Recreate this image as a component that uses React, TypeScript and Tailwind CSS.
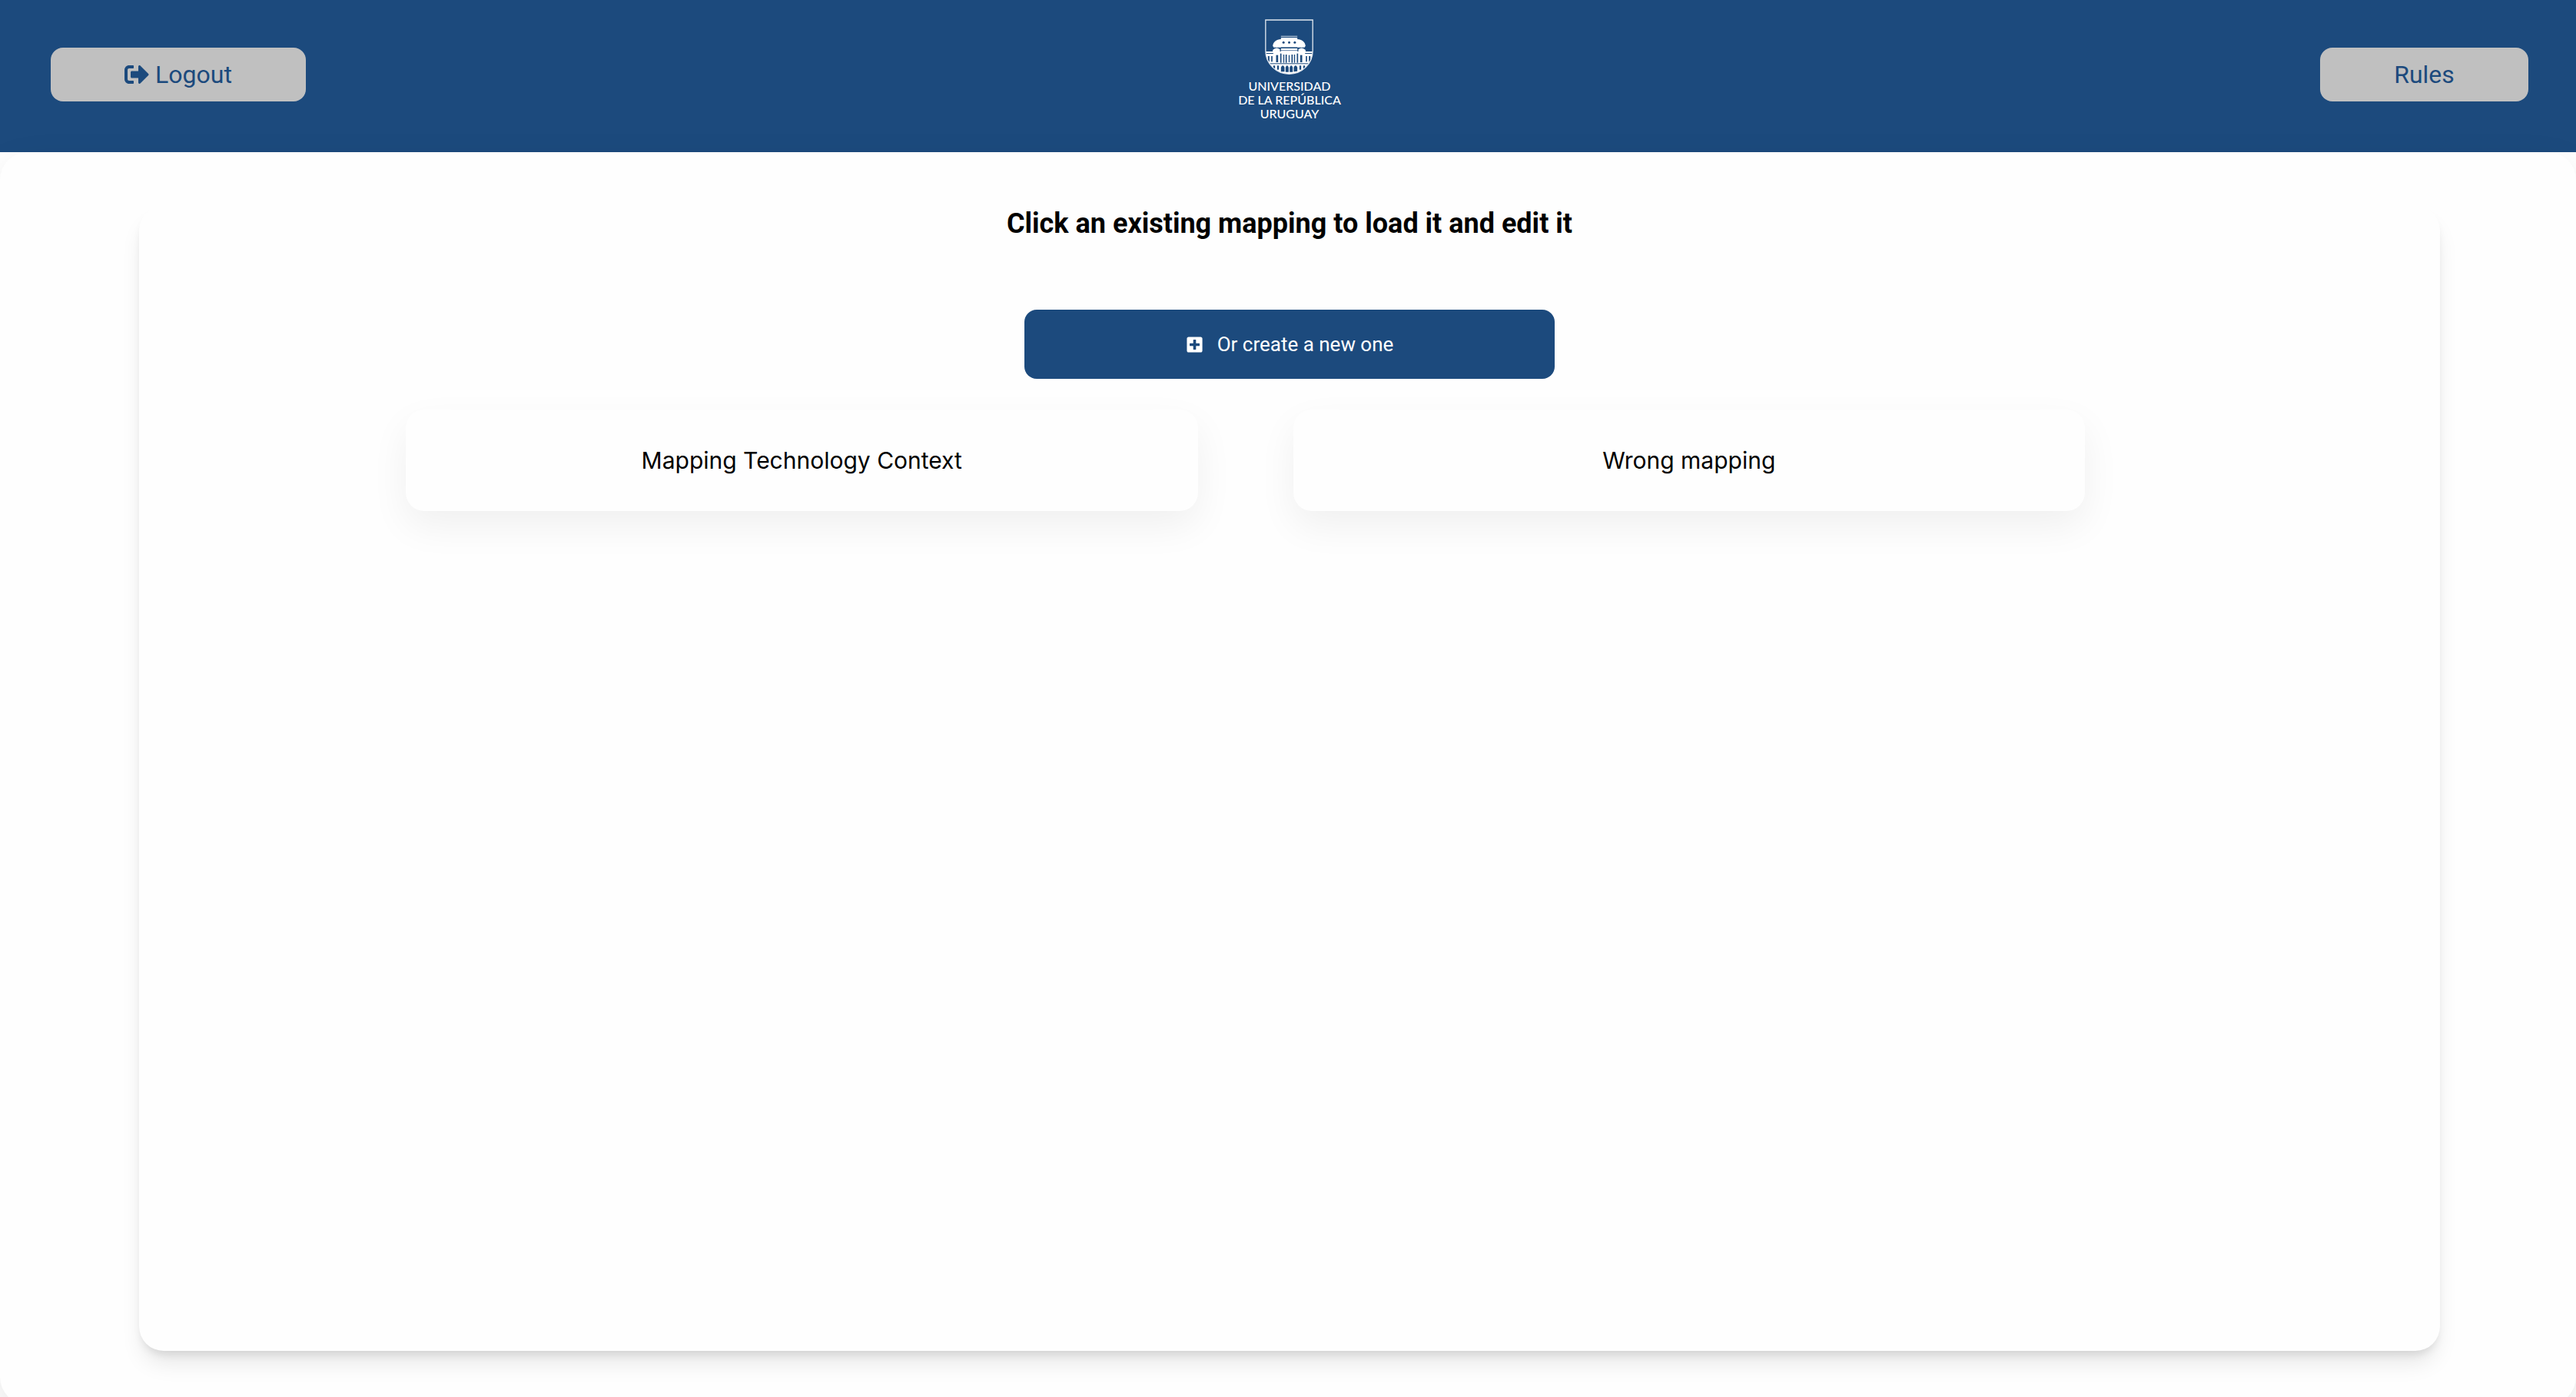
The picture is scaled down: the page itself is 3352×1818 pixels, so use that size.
import { FaPlusSquare, FaSignOutAlt } from "react-icons/fa";

const mappings = ["Mapping Technology Context", "Wrong mapping"];

function Shield() {
  return (
    <svg viewBox="50 28 188 216" className="h-[72px] w-[63px]" aria-hidden="true">
      <defs>
        <clipPath id="shield">
          <path d="M52 31H236V150A92 92 0 0 1 52 150Z" />
        </clipPath>
      </defs>
      <g clipPath="url(#shield)">
        <rect x="50" y="154" width="188" height="90" fill="#fff" />
        <g fill="#1c4a7d">
          <rect x="50" y="160" width="32" height="3" />
          <rect x="206" y="160" width="32" height="3" />
          <rect x="61" y="172" width="6" height="22" />
          <rect x="74" y="172" width="5" height="22" />
          <rect x="209" y="172" width="5" height="22" />
          <rect x="221" y="172" width="6" height="22" />
          <rect x="93" y="168" width="8" height="28" />
          <rect x="187" y="168" width="8" height="28" />
          <rect x="109" y="162" width="5" height="36" />
          <rect x="174" y="162" width="5" height="36" />
          <rect x="121" y="166" width="4" height="32" />
          <rect x="130" y="166" width="5" height="32" />
          <rect x="142" y="168" width="4" height="28" />
          <rect x="153" y="166" width="5" height="32" />
          <rect x="163" y="166" width="4" height="32" />
          <rect x="58" y="200" width="172" height="3" />
          <rect x="82" y="209" width="7" height="12" />
          <rect x="97" y="209" width="7" height="16" />
          <rect x="184" y="209" width="7" height="16" />
          <rect x="199" y="209" width="7" height="12" />
          <path d="M112 231V216Q119 202 126 216V233H112Z" />
          <path d="M130 234V216Q136 202 142 216V234Z" />
          <path d="M146 234V216Q152 202 158 216V234Z" />
          <path d="M162 233V216Q169 202 176 216V231Z" />
        </g>
      </g>
      <path d="M112 95H176" stroke="#a9bbd0" strokeWidth="4" />
      <path
        d="M112 100H176V106C194 107 206 116 208 132L204 138H84L80 132C82 116 94 107 112 106Z"
        fill="#fff"
      />
      <path d="M80 154V148Q94 134 108 146V154Z M180 154V146Q194 134 208 148V154Z M112 142H176V154H112Z" fill="#fff" />
      <path d="M112 150H176" stroke="#1c4a7d" strokeWidth="2" />
      <path d="M112 139H176" stroke="#1c4a7d" strokeWidth="3" />
      <g fill="#1c4a7d">
        <circle cx="122" cy="119" r="4.5" />
        <circle cx="144" cy="119" r="4.5" />
        <circle cx="166" cy="119" r="4.5" />
      </g>
      <path d="M52 31H236V150A92 92 0 0 1 52 150Z" fill="none" stroke="#dfe6ee" strokeWidth="4" />
    </svg>
  );
}

function Logo() {
  return (
    <div className="flex flex-col items-center">
      <Shield />
      <p className="mt-1.5 text-center font-[Lato,sans-serif] text-[16px] leading-[18px] font-medium text-white">
        UNIVERSIDAD
        <br />
        DE LA REPÚBLICA
        <br />
        URUGUAY
      </p>
    </div>
  );
}

export default function App() {
  return (
    <div className="min-h-screen overflow-hidden bg-white font-[Roboto,sans-serif] text-black">
      <header className="grid h-[198px] grid-cols-[1fr_auto_1fr] items-start bg-[#1c4a7d] pr-[62px] pl-[66px]">
        <button
          type="button"
          className="mt-[62px] flex h-[70px] w-[332px] items-center justify-center gap-2 rounded-2xl bg-[#c0c0c0] text-[32px] text-[#1c4a7d]"
        >
          <FaSignOutAlt />
          Logout
        </button>
        <div className="pt-[25px]">
          <Logo />
        </div>
        <button
          type="button"
          className="mt-[62px] h-[70px] w-[271px] justify-self-end rounded-2xl bg-[#c0c0c0] text-[32px] text-[#1c4a7d]"
        >
          Rules
        </button>
      </header>

      <main className="flex min-h-[1630px] rounded-[36px] bg-[#fefefe] py-[70px] pr-[177px] pl-[181px] shadow-[0_20px_50px_rgba(0,0,0,0.1)]">
        <section className="flex grow flex-col rounded-[32px] bg-[#fefefe] shadow-[0_20px_30px_-6px_rgba(0,0,0,0.1),0_8px_12px_-4px_rgba(0,0,0,0.1)]">
          <h1 className="text-center text-[36px] leading-[46px] font-bold">
            Click an existing mapping to load it and edit it
          </h1>
          <button
            type="button"
            className="mt-[89px] flex h-[90px] w-[690px] items-center justify-center gap-[18px] self-center rounded-2xl bg-[#1c4a7d] text-[26px] text-white"
          >
            <FaPlusSquare className="size-[23px]" />
            Or create a new one
          </button>
          <div className="mt-10 grid grid-cols-2 gap-[124px] pr-[462px] pl-[347px]">
            {mappings.map((name) => (
              <button
                key={name}
                type="button"
                className="h-[132px] rounded-3xl bg-[#fefefe] font-[Inter,sans-serif] text-[30px] shadow-[0_20px_50px_rgba(0,0,0,0.06)]"
              >
                {name}
              </button>
            ))}
          </div>
        </section>
      </main>
    </div>
  );
}
